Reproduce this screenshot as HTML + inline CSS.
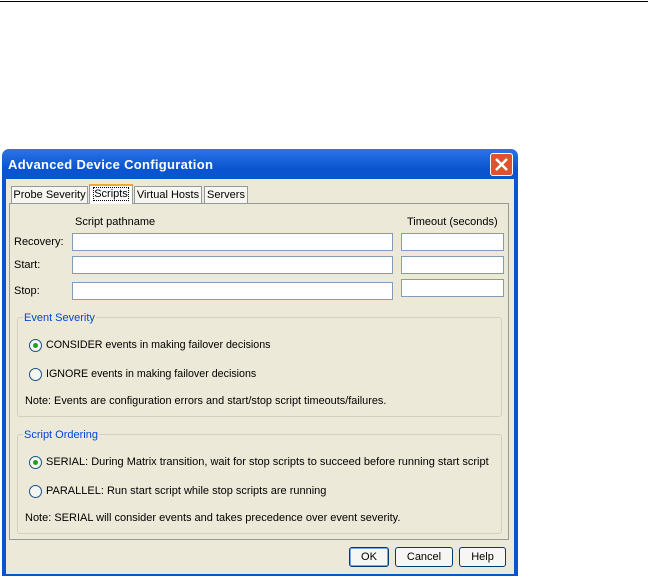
<!DOCTYPE html>
<html><head><style>
body{margin:0;width:648px;height:578px;background:#fff;position:relative;overflow:hidden;font-family:"Liberation Sans",sans-serif;font-size:11px;color:#000}
.a{position:absolute}
.dlg{left:2px;top:149px;width:516px;height:427px;background:linear-gradient(#2b74e8,#0a54d0 20px);border-radius:7px 7px 0 0}
.body{left:6px;top:179px;width:508px;height:395px;background:#ece9d8}
.title{left:8px;top:157px;color:#fff;font-weight:bold;font-size:13px;letter-spacing:.3px}
.close{left:490px;top:153px;width:23px;height:23px;background:#e0512e;border:1px solid #fff;border-radius:3px;box-sizing:border-box}
.tab{top:186px;height:17px;background:#f7f6f0;border:1px solid #919b9c;border-bottom:none;box-sizing:border-box;line-height:16px;text-align:center}
.panel{left:9px;top:203px;width:500px;height:337px;background:#ece9d8;border:1px solid #919b9c;box-sizing:border-box}
.inp{background:#fff;border:1px solid #7f9db9;box-sizing:border-box;height:18px}
.grp{border:1px solid #d0d0bf;border-radius:3px;box-sizing:border-box}
.leg{color:#0046d5;background:#ece9d8;padding:0 1px}
.rad{width:13px;height:13px;border:1px solid #1c5180;border-radius:50%;background:#f4f4f0;box-sizing:border-box}
.dot{position:absolute;left:3px;top:3px;width:5px;height:5px;border-radius:50%;background:#21a121}
.btn{top:547px;height:20px;border:1px solid #003c74;border-radius:3px;background:#f6f6f2;box-sizing:border-box;text-align:center;line-height:18px}
</style></head><body>
<div class="a" style="left:0;top:1px;width:648px;height:1px;background:#000"></div>
<div class="a dlg"></div>
<div class="a body"></div>
<div class="a title">Advanced Device Configuration</div>
<div class="a close"><svg width="21" height="21" style="position:absolute;left:0;top:0"><path d="M5 5L16 16M16 5L5 16" stroke="#fff" stroke-width="2.5"/></svg></div>
<div class="a panel"></div>
<div class="a tab" style="left:11px;width:77px">Probe Severity</div>
<div class="a tab" style="left:89px;top:184px;height:20px;width:44px;background:#fcfcfe;border-top:2px solid #f2a634"><span style="outline:1px dotted #000">Scripts</span></div>
<div class="a tab" style="left:134px;width:68px">Virtual Hosts</div>
<div class="a tab" style="left:204px;width:44px">Servers</div>
<div class="a" style="left:75px;top:216px">Script pathname</div>
<div class="a" style="left:407px;top:216px">Timeout (seconds)</div>
<div class="a" style="left:14px;top:236px">Recovery:</div>
<div class="a" style="left:14px;top:259px">Start:</div>
<div class="a" style="left:14px;top:285px">Stop:</div>
<div class="a inp" style="left:72px;top:233px;width:321px"></div>
<div class="a inp" style="left:72px;top:256px;width:321px"></div>
<div class="a inp" style="left:72px;top:282px;width:321px"></div>
<div class="a inp" style="left:401px;top:233px;width:103px"></div>
<div class="a inp" style="left:401px;top:256px;width:103px"></div>
<div class="a inp" style="left:401px;top:279px;width:103px"></div>
<div class="a grp" style="left:17px;top:317px;width:485px;height:100px"></div>
<div class="a leg" style="left:23px;top:312px">Event Severity</div>
<div class="a rad" style="left:29px;top:339px"><div class="dot"></div></div>
<div class="a" style="left:46px;top:339px;font-size:10.7px">CONSIDER events in making failover decisions</div>
<div class="a rad" style="left:29px;top:368px"></div>
<div class="a" style="left:46px;top:368px;font-size:10.7px">IGNORE events in making failover decisions</div>
<div class="a" style="left:25px;top:395px;font-size:10.9px">Note: Events are configuration errors and start/stop script timeouts/failures.</div>
<div class="a grp" style="left:17px;top:434px;width:485px;height:100px"></div>
<div class="a leg" style="left:23px;top:429px">Script Ordering</div>
<div class="a rad" style="left:29px;top:456px"><div class="dot"></div></div>
<div class="a" style="left:46px;top:456px;white-space:nowrap">SERIAL: During Matrix transition, wait for stop scripts to succeed before running start script</div>
<div class="a rad" style="left:29px;top:485px"></div>
<div class="a" style="left:46px;top:485px">PARALLEL: Run start script while stop scripts are running</div>
<div class="a" style="left:25px;top:512px">Note: SERIAL will consider events and takes precedence over event severity.</div>
<div class="a btn" style="left:349px;width:40px;border-color:#003c74;box-shadow:inset 0 0 0 1px #7ea3e6">OK</div>
<div class="a btn" style="left:395px;width:58px">Cancel</div>
<div class="a btn" style="left:459px;width:47px">Help</div>
</body></html>
